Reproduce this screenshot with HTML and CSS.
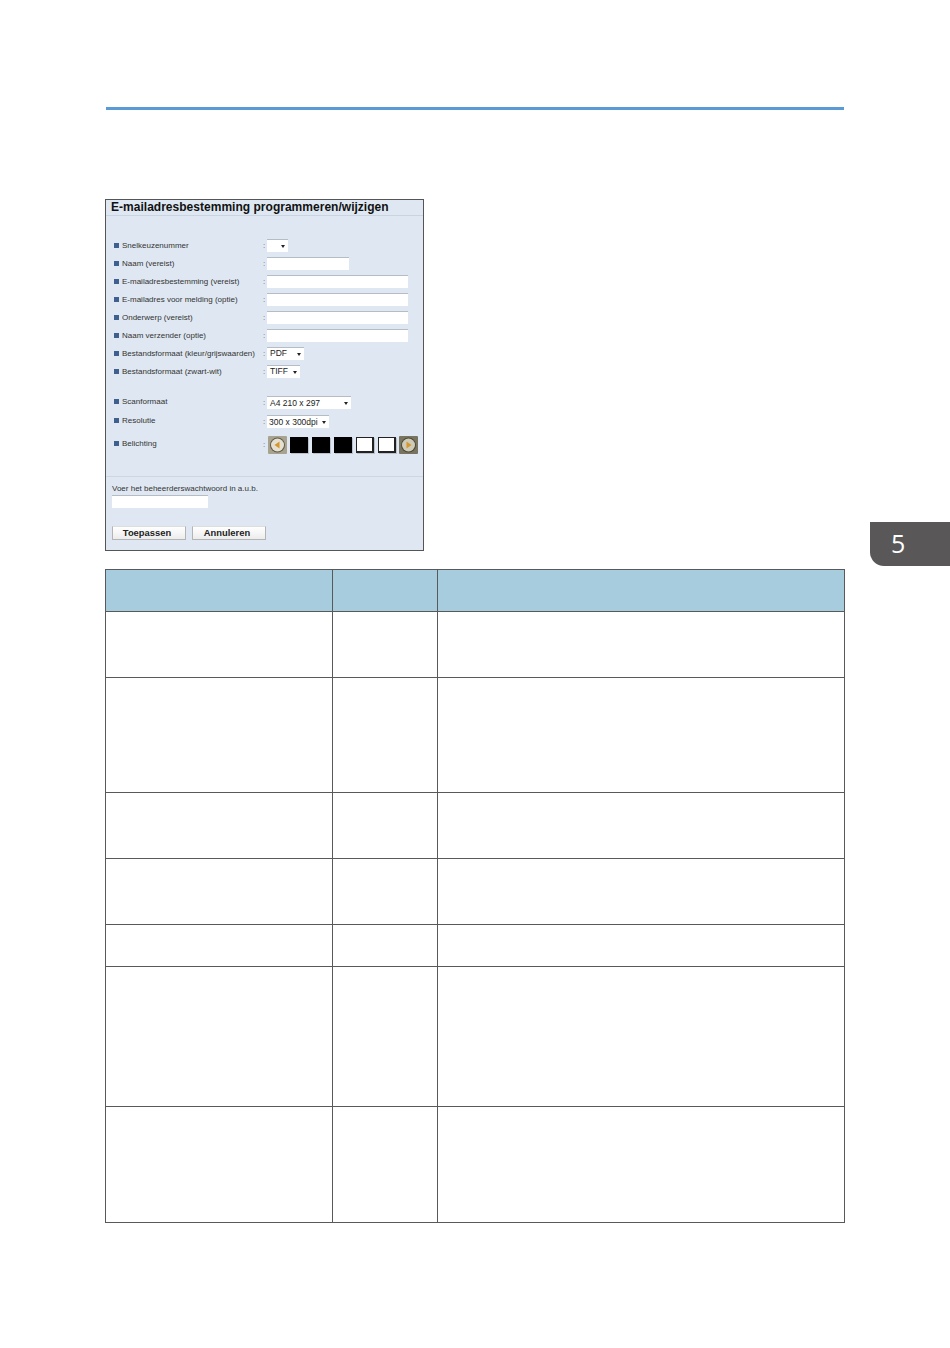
FILE: index.html
```html
<!DOCTYPE html>
<html lang="nl">
<head>
    <meta charset="UTF-8">
    <title>E-mailadresbestemming programmeren/wijzigen</title>
    <link rel="stylesheet" href="styles.css">
</head>
<body>
    <div class="top-rule"></div>

    <div class="shot">
        <h1>E-mailadresbestemming programmeren/wijzigen</h1>

        <div class="fields">
            <div class="row"><span class="label">Snelkeuzenummer</span><span class="colon">:</span><span class="select w-21"><i></i></span></div>
            <div class="row"><span class="label">Naam (vereist)</span><span class="colon">:</span><span class="input w-82"></span></div>
            <div class="row"><span class="label">E-mailadresbestemming (vereist)</span><span class="colon">:</span><span class="input w-141"></span></div>
            <div class="row"><span class="label">E-mailadres voor melding (optie)</span><span class="colon">:</span><span class="input w-141"></span></div>
            <div class="row"><span class="label">Onderwerp (vereist)</span><span class="colon">:</span><span class="input w-141"></span></div>
            <div class="row"><span class="label">Naam verzender (optie)</span><span class="colon">:</span><span class="input w-141"></span></div>
            <div class="row"><span class="label">Bestandsformaat (kleur/grijswaarden)</span><span class="colon">:</span><span class="select w-37">PDF<i></i></span></div>
            <div class="row"><span class="label">Bestandsformaat (zwart-wit)</span><span class="colon">:</span><span class="select w-33">TIFF<i></i></span></div>

            <div class="row row-scan"><span class="label">Scanformaat</span><span class="colon">:</span><span class="select w-84">A4 210 x 297<i></i></span></div>
            <div class="row row-res"><span class="label">Resolutie</span><span class="colon">:</span><span class="select w-62 tight">300 x 300dpi<i></i></span></div>
            <div class="row row-exp">
                <span class="label">Belichting</span><span class="colon">:</span>
                <div class="exposure">
                    <svg class="arrow" viewBox="0 0 19 18"><rect width="19" height="18" rx="1" fill="#a8a38e"/><circle cx="9.5" cy="9" r="7.5" fill="#5f5a49"/><circle cx="9.5" cy="9" r="6.5" fill="#e4e0d2"/><path d="M11.5 5.5v7L6.5 9z" fill="#d9962a"/></svg>
                    <span class="level on"></span>
                    <span class="level on"></span>
                    <span class="level on"></span>
                    <span class="level"></span>
                    <span class="level"></span>
                    <svg class="arrow" viewBox="0 0 19 18"><rect width="19" height="18" rx="1" fill="#79745f"/><circle cx="9.5" cy="9" r="7.5" fill="#4c4838"/><circle cx="9.5" cy="9" r="6.5" fill="#cfcbb9"/><path d="M7.5 5.5v7L12.5 9z" fill="#d9962a"/></svg>
                </div>
            </div>
        </div>

        <div class="admin">
            <p>Voer het beheerderswachtwoord in a.u.b.</p>
            <span class="input w-96"></span>
            <div class="buttons">
                <span class="btn">Toepassen</span>
                <span class="btn">Annuleren</span>
            </div>
        </div>
    </div>

    <table class="grid">
        <tr class="head"><th class="c1"></th><th class="c2"></th><th></th></tr>
        <tr class="h66"><td></td><td></td><td></td></tr>
        <tr class="h115"><td></td><td></td><td></td></tr>
        <tr class="h66"><td></td><td></td><td></td></tr>
        <tr class="h66"><td></td><td></td><td></td></tr>
        <tr class="h42"><td></td><td></td><td></td></tr>
        <tr class="h140"><td></td><td></td><td></td></tr>
        <tr class="h116"><td></td><td></td><td></td></tr>
    </table>

    <div class="tab">5</div>
</body>
</html>
```

FILE: styles.css
```css
body {
    margin: 0;
    background: #fff;
    font-family: "Liberation Sans", Arial, sans-serif;
    padding: 107px 0 0 105px;
    height: 1241px;
    overflow: hidden;
}

.top-rule {
    width: 738px;
    height: 3px;
    margin-left: 1px;
    background: #5b9bd5;
}

/* the embedded screenshot of the web form */
.shot {
    box-sizing: border-box;
    width: 319px;
    height: 352px;
    margin-top: 89px;
    background: #dfe8f2;
    border: 1px solid #555;
    color: #333;
    font-size: 8px;
}

.shot h1 {
    margin: 0;
    height: 15px;
    padding-left: 5px;
    font-size: 12px;
    line-height: 14px;
    letter-spacing: 0.02px;
    font-weight: bold;
    color: #111;
    border-bottom: 1px solid #c8d4e0;
    white-space: nowrap;
}

.fields {
    padding: 20px 0 0 7px;
}

.row {
    display: flex;
    align-items: center;
    height: 18px;
}

.row-scan {
    margin-top: 13px;
    height: 19px;
}

.row-res {
    height: 19px;
}

.row-exp {
    height: 27px;
}

.label {
    width: 150px;
    padding-left: 9px;
    box-sizing: border-box;
    position: relative;
    white-space: nowrap;
}

.row-scan .label,
.row-res .label,
.row-exp .label {
    margin-top: -2px;
}

.label::before {
    content: "";
    position: absolute;
    left: 1px;
    top: 2px;
    width: 5px;
    height: 5px;
    background: #3f5f8f;
}

.colon {
    width: 4px;
    color: #666;
}

.input,
.select {
    display: block;
    box-sizing: border-box;
    height: 13px;
    background: #fff;
    border-top: 1px solid #b5bcc4;
}

.select {
    display: flex;
    align-items: center;
    padding-left: 3px;
    font-size: 8.5px;
    line-height: 1;
    color: #222;
    position: relative;
}

.select.tight {
    padding-left: 2px;
}

.select i {
    position: absolute;
    right: 3px;
    top: 5px;
    border: 2.5px solid transparent;
    border-top: 3px solid #222;
    border-bottom: 0;
}

.w-21 { width: 21px; }
.w-33 { width: 33px; }
.w-37 { width: 37px; }
.w-62 { width: 62px; }
.w-82 { width: 82px; }
.w-84 { width: 84px; }
.w-96 { width: 96px; }
.w-141 { width: 141px; }

.exposure {
    display: flex;
    align-items: center;
    gap: 4px;
    margin-left: 1px;
}

.arrow {
    display: block;
    width: 19px;
    height: 18px;
    margin-right: -1px;
}

.arrow:last-child {
    margin-right: 0;
    margin-left: -1px;
}

.level {
    box-sizing: border-box;
    width: 18px;
    height: 16px;
    margin-top: 1px;
    background: #fff;
    border: 1px solid #222;
    border-width: 1px 2px 2px 1px;
    box-shadow: 1px 1px 0 #b9c2cc;
}

.level.on {
    background: #000;
    border-color: #000;
}

.admin {
    margin-top: 18px;
    padding: 7px 0 0 6px;
    border-top: 1px solid #ccd7e2;
}

.admin p {
    margin: 0 0 2px;
    line-height: 9px;
    white-space: nowrap;
}

.buttons {
    display: flex;
    gap: 6px;
    margin-top: 18px;
}

.btn {
    box-sizing: border-box;
    width: 74px;
    height: 14px;
    padding-right: 4px;
    background: linear-gradient(#fff, #ececec);
    border: 1px solid #b4b4b4;
    border-top-color: #ddd;
    font-size: 9.4px;
    font-weight: bold;
    line-height: 12px;
    text-align: center;
    color: #222;
}

/* parameter table below the screenshot */
.grid {
    border-collapse: collapse;
    table-layout: fixed;
    width: 740px;
    margin: 18px 0 0;
}

.grid th,
.grid td {
    border: 1px solid #595959;
    padding: 0;
}

.grid .c1 { width: 226px; }
.grid .c2 { width: 104px; }

.head { height: 42px; }
.head th { background: #a6ccdd; }

.h42 { height: 42px; }
.h66 { height: 66px; }
.h115 { height: 115px; }
.h116 { height: 116px; }
.h140 { height: 140px; }

.tab {
    position: absolute;
    left: 870px;
    top: 522px;
    width: 80px;
    height: 44px;
    box-sizing: border-box;
    padding-left: 21px;
    background: #595757;
    border-bottom-left-radius: 14px;
    color: #fff;
    font-family: "Open Sans", sans-serif;
    font-size: 25px;
    line-height: 43px;
}
```
